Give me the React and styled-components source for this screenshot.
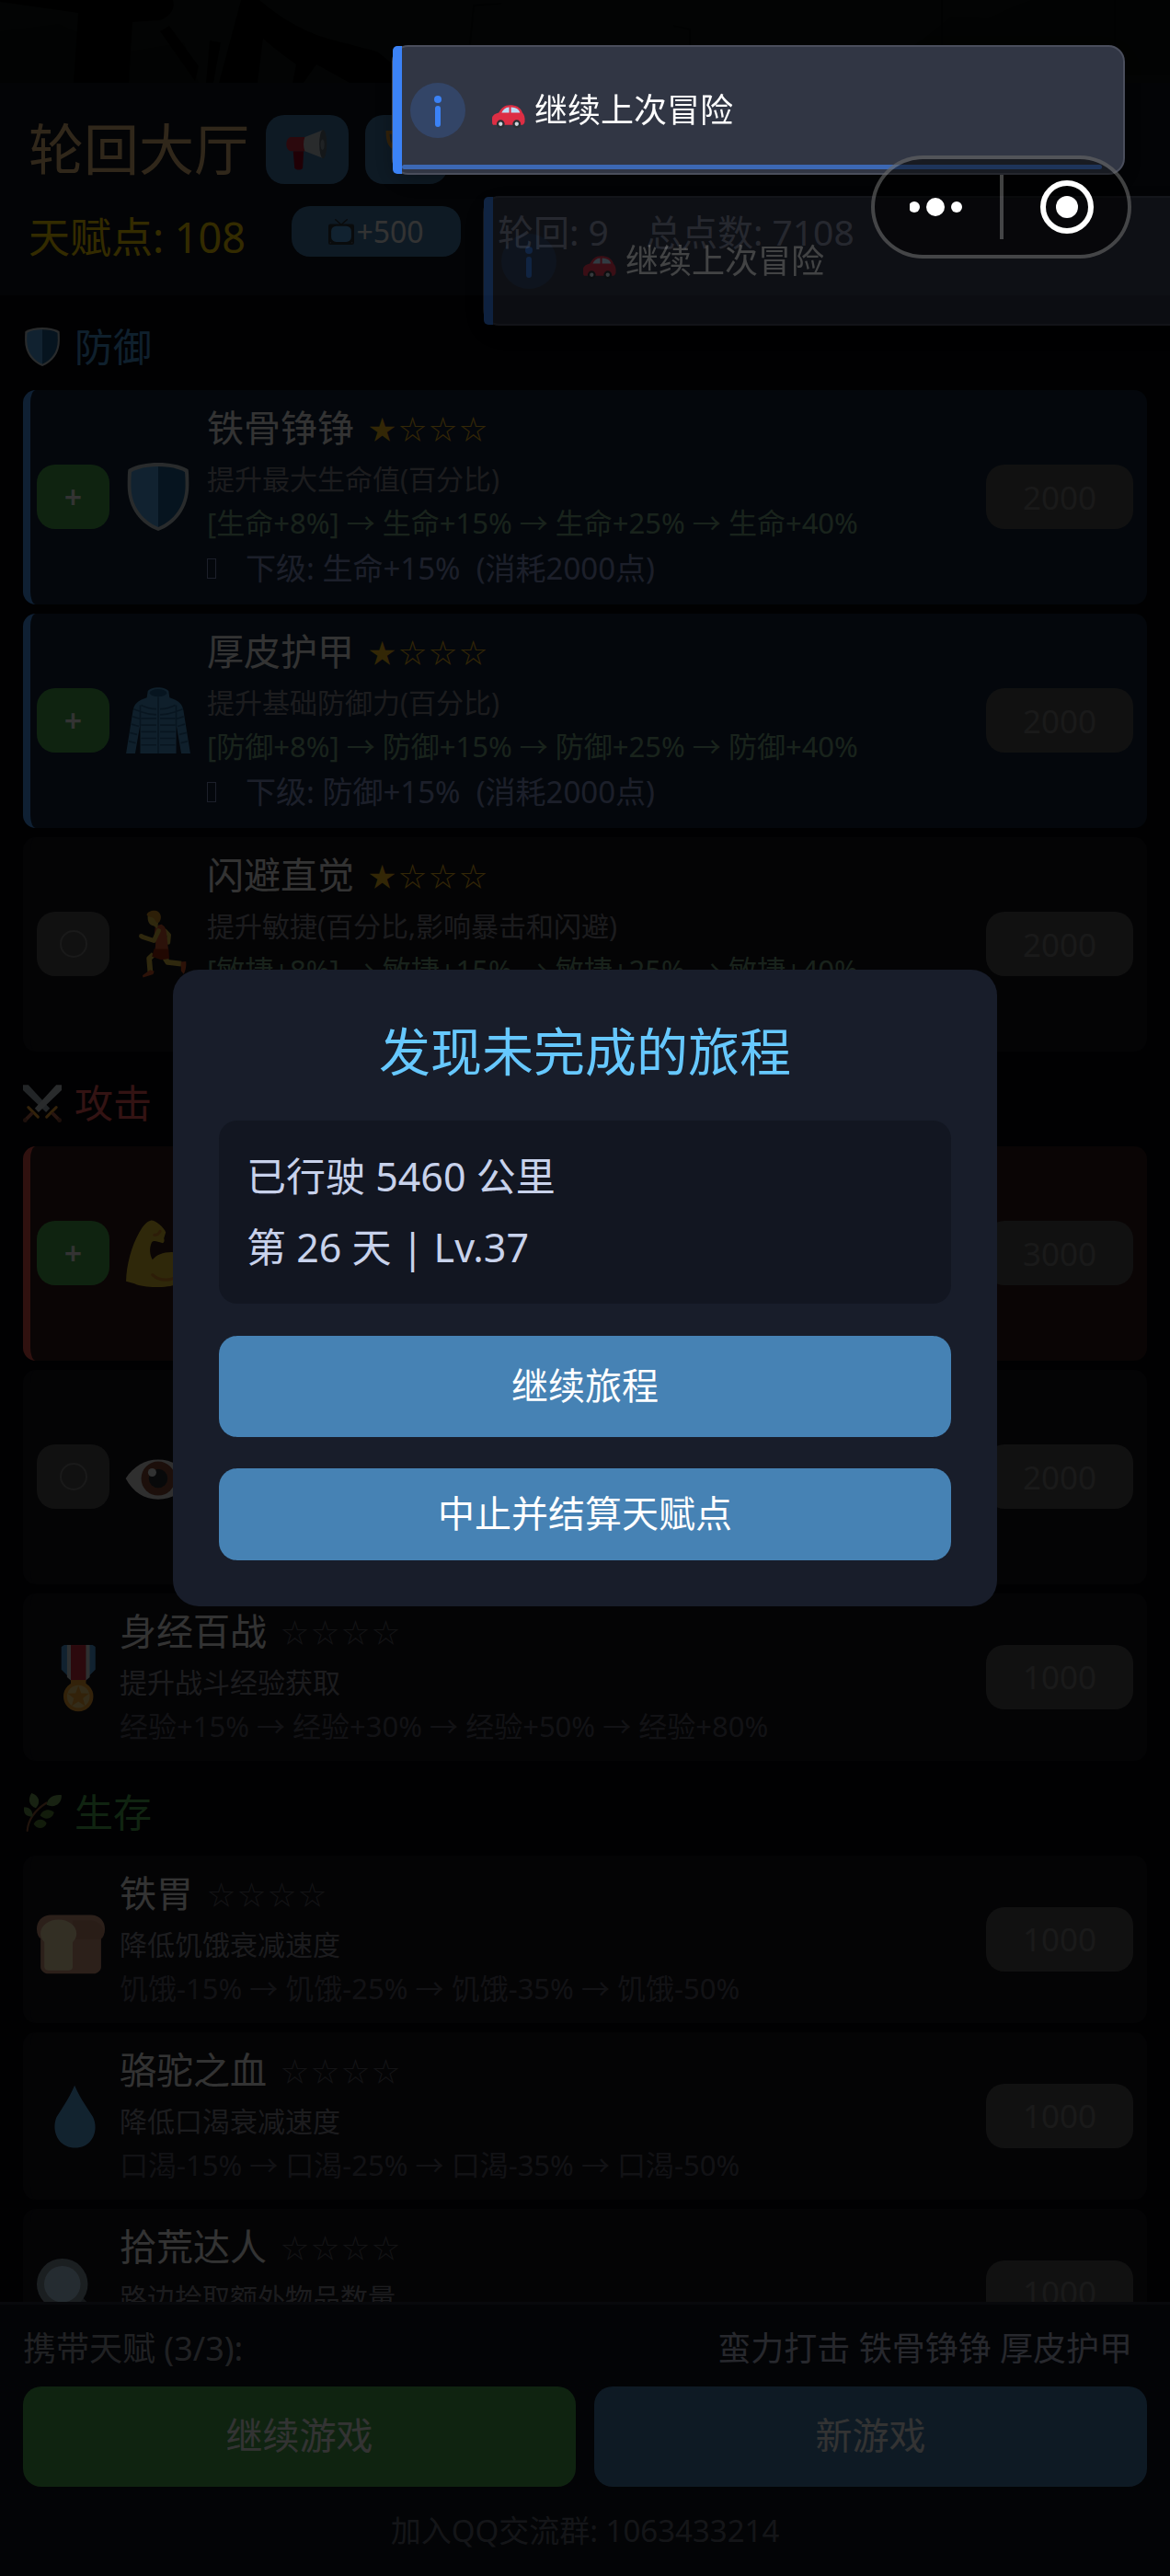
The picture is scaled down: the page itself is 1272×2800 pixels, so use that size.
import React from "react";
import styled, { createGlobalStyle } from "styled-components";

const sections = [
  {
    key: "defense",
    title: "防御",
    icon: "shield",
    color: "#4a9ee0",
    skills: [
      {
        name: "铁骨铮铮",
        icon: "shield",
        toggle: "on",
        level: 1,
        desc: "提升最大生命值(百分比)",
        levels: "[生命+8%] → 生命+15% → 生命+25% → 生命+40%",
        next: "下级: 生命+15%  (消耗2000点)",
        price: 2000,
        tone: "blue",
      },
      {
        name: "厚皮护甲",
        icon: "coat",
        toggle: "on",
        level: 1,
        desc: "提升基础防御力(百分比)",
        levels: "[防御+8%] → 防御+15% → 防御+25% → 防御+40%",
        next: "下级: 防御+15%  (消耗2000点)",
        price: 2000,
        tone: "blue",
      },
      {
        name: "闪避直觉",
        icon: "runner",
        toggle: "off",
        level: 1,
        desc: "提升敏捷(百分比,影响暴击和闪避)",
        levels: "[敏捷+8%] → 敏捷+15% → 敏捷+25% → 敏捷+40%",
        next: "下级: 敏捷+15%  (消耗2000点)",
        price: 2000,
      },
    ],
  },
  {
    key: "attack",
    title: "攻击",
    icon: "swords",
    color: "#ff6060",
    skills: [
      {
        name: "蛮力打击",
        icon: "bicep",
        toggle: "on",
        level: 1,
        desc: "提升攻击力(百分比)",
        levels: "[攻击+15%] → 攻击+25%",
        next: "下级: 攻击+25%  (消耗3000点)",
        price: 3000,
        tone: "red",
      },
      {
        name: "致命洞察",
        icon: "eye",
        toggle: "off",
        level: 1,
        desc: "提升暴击率",
        levels: "[暴击+5%] → 暴击+10%",
        next: "下级: 暴击+10%  (消耗2000点)",
        price: 2000,
      },
      {
        name: "身经百战",
        icon: "medal",
        level: 0,
        desc: "提升战斗经验获取",
        levels: "经验+15% → 经验+30% → 经验+50% → 经验+80%",
        price: 1000,
      },
    ],
  },
  {
    key: "survival",
    title: "生存",
    icon: "herb",
    color: "#4fb455",
    skills: [
      {
        name: "铁胃",
        icon: "bread",
        level: 0,
        desc: "降低饥饿衰减速度",
        levels: "饥饿-15% → 饥饿-25% → 饥饿-35% → 饥饿-50%",
        price: 1000,
      },
      {
        name: "骆驼之血",
        icon: "drop",
        level: 0,
        desc: "降低口渴衰减速度",
        levels: "口渴-15% → 口渴-25% → 口渴-35% → 口渴-50%",
        price: 1000,
      },
      {
        name: "拾荒达人",
        icon: "lens",
        level: 0,
        desc: "路边拾取额外物品数量",
        levels: "拾取+1 → 拾取+2 → 拾取+3 → 拾取+4",
        price: 1000,
      },
    ],
  },
];

const art = {
  shield: (
    <>
      <path fill="#CCD6DD" d="M18 0c6 0 11.500 1 15.800 3.500.3 1 .4 4 .4 8.500 0 12-7 20.500-16.200 24C8.800 32.500 1.800 24 1.800 12c0-4.500.1-7.500.4-8.500C6.500 1 12 0 18 0z" />
      <path fill="#55ACEE" d="M18 2C12.500 2 7.800 2.800 3.900 4.900c-.2 1.600-.3 4-.3 7.100 0 10.900 6.100 18.500 14.400 22z" />
      <path fill="#226699" d="M18 2c5.500 0 10.200.8 14.100 2.900.2 1.600.3 4 .3 7.100 0 10.900-6.100 18.500-14.400 22z" />
    </>
  ),
  coat: (
    <>
      <path fill="#4A9AD4" d="M12.500 2.500c2-2.500 9-2.500 11 0L24 6c4 1.500 6.500 2.500 7.300 6.500L35 35.500h-4.800L27.500 20v15.500h-19V20L5.800 35.500H1l3.700-23C5.500 8.500 8 7.500 12 6z" />
      <ellipse cx="18" cy="3.500" rx="4.500" ry="2" fill="#226699" />
      <path fill="none" stroke="#2B6C9E" strokeWidth=".8" d="M18 5.500v30M9 10q4 2 8 2M9 13.500q4 1.500 8 1.500M9 17h8M9 20.500h8M9 24h8M9 27.500h8M9 31h8M19 12q4 0 8-2M19 15q4 0 8-1.500M19 17h8M19 20.500h8M19 24h8M19 27.500h8M19 31h8M5 12l4 1.500M4.500 16l4 1.300M3.800 20l4 1.200M3 24.500l3.800 1M2.400 29l3.700 1M31 12l-4 1.500M31.500 16l-4 1.300M32.200 20l-4 1.200M33 24.500l-3.800 1M33.600 29l-3.700 1M8.500 10v11M27.500 10v11" />
    </>
  ),
  runner: (
    <>
      <path fill="none" stroke="#E8C547" strokeWidth="2.200" strokeLinejoin="round" strokeLinecap="round" d="M21.500 11l2.200 2.300-.4 4" />
      <path fill="none" stroke="#E8C547" strokeWidth="2.800" strokeLinejoin="round" d="M21 24.500l2 3.200 7.200.8M15.500 23.500l-2.300 2.200.6 7" />
      <path fill="#DE5B2C" d="M30 27.500l2.700-.3c.3 2.500-.2 4.800-1.200 6.700l-1.400-1.500zM9.700 34.700l4-3 2.200.8-.6 1.600-5.300 1.600z" />
      <path fill="#DD5A35" d="M16.500 8.500l3.200-.8c1.700.8 2.300 2 2.600 4l1.100 9.800h-7.200c.6-3.500.6-5-.3-8z" />
      <path fill="#A62A0A" d="M15.800 20.700h7.700l.3 5.100-4.300.6-4.800-1.700z" />
      <path fill="none" stroke="#E8C547" strokeWidth="2.400" strokeLinejoin="round" strokeLinecap="round" d="M18.200 11l-2.500 5.300-6-2" />
      <circle cx="9" cy="13.900" r="1.200" fill="#E8C547" />
      <path fill="#E8C547" d="M12.500 3l6 1-1 6-1.800-1.500c-2.500-.5-3.500-2.500-3.200-5.500z" />
      <path fill="#E09A28" d="M11.900 2.500C13-.3 19-.8 19.400 3.500c.1 2-.9 3.500-1.900 3.300-1-.2-1.200-2.400-2.600-2.800-1.200-.4-2.300-.3-3-1.500z" />
    </>
  ),
  bicep: (
    <>
      <path fill="#E8C832" d="M14 .8c-2 .3-4 2.700-6 6.200C4 14 1.200 24 1 33l4.500 1.200c5 2.500 17 2.300 22.500.3 4-1.500 6-5 6-8.500 0-5.500-4-8.500-9-8.500-4.500 0-8 1.500-10 4-1.500-2.500-1.800-6-.5-9 1.200-1.500 3-.5 5.500.2 1 .2 1.500-1 1-2.500l1-3.200C21 4.500 16.500.500 14 .8z" />
      <path fill="none" stroke="#E0912A" strokeWidth="1.600" strokeLinecap="round" d="M15 29.500c4 3.500 10 3.500 13 .5M16 8.500c1.500 0 2.500-1 3-2" />
    </>
  ),
  eye: (
    <>
      <path fill="#E8E8E8" d="M.8 19C5 12.500 11 9 18 9s13 3.500 17.200 10C31 26.500 25.500 30 18 30S5 26.500.8 19z" />
      <circle cx="18" cy="19" r="9" fill="#8A4B38" />
      <circle cx="18" cy="19" r="5" fill="#292F33" />
      <circle cx="14.800" cy="15.800" r="2.200" fill="#F5F8FA" />
    </>
  ),
  medal: (
    <>
      <path fill="#55ACEE" d="M13 2l1.500-1h15L31 2v12l-6 6h-6l-6-6z" />
      <path fill="#E1E8ED" d="M16 1h12v17l-3 2.500h-6L16 18z" />
      <path fill="#DD2E44" d="M18 1h8v19h-8z" />
      <path fill="#FFAC33" d="M18 19.500h8v4h-8z" />
      <circle cx="22" cy="28.200" r="7.900" fill="#FFAC33" />
      <circle cx="22" cy="28.200" r="6" fill="#FFD983" />
      <path fill="#FFAC33" d="M22 22.500l1.500 4 4.200.1-3.300 2.600 1.200 4.100-3.600-2.400-3.600 2.400 1.200-4.100-3.300-2.600 4.200-.1z" />
    </>
  ),
  bread: (
    <>
      <path fill="#D99E82" d="M7 6h22c5 .5 7 4.500 7 8.500 0 3-1 5-2 6V38c0 2-2 4-4 4H6c-2 0-4-2-4-4V20.500c-1-1-2-3-2-6C0 10 2.500 6.500 7 6z" transform="scale(1 .86)" />
      <path fill="#B87B61" d="M19 8h10c4 .5 6.500 3 6.500 7 0 1.500-.6 2.700-1.500 3H20z" opacity=".4" />
      <path fill="#FFE8B6" d="M11.500 7.500c5 0 9.500 3 9.500 7.500 0 2-1 3.500-2 4.500v13c0 1-.8 1.900-2 1.900H6c-1.200 0-2-.9-2-1.900v-13c-1-1-2-2.500-2-4.500 0-4.500 4.500-7.500 9.500-7.500z" />
    </>
  ),
  drop: (
    <path fill="#5DADEC" d="M20 1.800c2.500 6 6.500 11.700 9.700 16.700C33 25.500 29.500 34.800 20.300 34.800S7.500 25.500 10.500 18.500C13.700 13.500 17.500 7.800 20 1.800z" />
  ),
  lens: (
    <>
      <path stroke="#66757F" strokeWidth="5" strokeLinecap="round" d="M22 22l11 11" />
      <circle cx="13.500" cy="13.500" r="13.500" fill="#8899A6" />
      <circle cx="13.500" cy="13.500" r="9.600" fill="#BBDDF5" />
    </>
  ),
  swords: (
    <>
      <path fill="#AAB8C2" d="M0 1h5l20 22-3.500 3.500L0 6z" />
      <path fill="#CCD6DD" d="M36 1h-5L11 23l3.500 3.500L36 6z" />
      <path fill="none" stroke="#FFAC33" strokeWidth="2.600" strokeLinecap="round" d="M5 22l9 9M31 22l-9 9" />
      <path fill="none" stroke="#C1694F" strokeWidth="3.200" strokeLinecap="round" d="M8 28l-6 6M28 28l6 6" />
      <circle cx="2" cy="34" r="2" fill="#8A4B38" />
      <circle cx="34" cy="34" r="2" fill="#8A4B38" />
    </>
  ),
  herb: (
    <>
      <path fill="none" stroke="#A0603C" strokeWidth="1.800" strokeLinecap="round" d="M4 35c1-11 7-19 18-26" />
      <path fill="#77A85A" d="M8 0c7 2 9 9 4 14C6 12 4 6 8 0zM36 2c0 9-7 12-14 9 1-7 7-10 14-9z" />
      <path fill="#6A9A50" d="M1 13c6 0 8 4 8 9-6 0-9-3-8-9z" />
      <path fill="#5C8A3A" d="M29 18c-2 7-9 7-13 3 2-6 9-7 13-3zM22 28c-2 6-9 6-12 1 2-5 9-6 12-1z" />
    </>
  ),
  megaphone: (
    <>
      <path fill="#A0041E" d="M6 19h9l-.8 14c-.2 2.500-6.500 2.500-7 0z" />
      <path fill="#DD2E44" d="M4 7h14v12H4C-1 18-1 8 4 7z" />
      <path fill="#CCD6DD" d="M16 7L31.500 1v24L16 19c-1.500-4-1.500-8 0-12z" />
      <ellipse cx="31.500" cy="13" rx="3.200" ry="12.300" fill="#66757F" />
      <ellipse cx="31" cy="13.500" rx="1.600" ry="4.500" fill="#99AAB5" />
    </>
  ),
  trophy: (
    <>
      <path fill="none" stroke="#FFAC33" strokeWidth="3" d="M9 3H2c0 8 2 13 9 15M27 3h7c0 8-2 13-9 15" />
      <path fill="#FFAC33" d="M8 0h20c0 12-3 20-8 22v7h6v5H10v-5h6v-7C11 20 8 12 8 0z" />
    </>
  ),
  tv: (
    <>
      <path fill="none" stroke="#31373D" strokeWidth="2" strokeLinecap="round" d="M10 1l8 7 8-7" />
      <rect x="0" y="7" width="36" height="29" rx="3" fill="#31373D" />
      <rect x="4" y="10" width="28" height="22" rx="7" fill="#55ACEE" />
      <circle cx="3" cy="33" r="1" fill="#66757F" />
      <circle cx="33" cy="33" r="1" fill="#66757F" />
    </>
  ),
  car: (
    <>
      <path fill="#DD2E44" d="M1 22c0-3 3-5 7-6 3-5 6-8 12-8s11 2 13 8c2 2 3 5 2.500 10-.5 2-2 3-3 3H3c-1.500 0-2-1-2-3z" />
      <path fill="#BBDDF5" d="M11 16c2-3.500 4-5.500 8-5.800V16zM21 10.200c5 .2 8 1.800 9.500 5.800H21z" />
      <circle cx="10" cy="28" r="4.300" fill="#292F33" />
      <circle cx="10" cy="28" r="2.100" fill="#CCD6DD" />
      <circle cx="27" cy="28" r="4.300" fill="#292F33" />
      <circle cx="27" cy="28" r="2.100" fill="#CCD6DD" />
    </>
  ),
};

const Emoji = ({ name, size }) => (
  <EmojiSvg viewBox="0 0 36 36" $size={size} aria-hidden="true">
    {art[name]}
  </EmojiSvg>
);

const SkillCard = ({ skill }) => (
  <Card $tone={skill.tone}>
    {skill.toggle && (
      <Toggle type="button" $on={skill.toggle === "on"} aria-label={skill.name}>
        {skill.toggle === "on" ? "+" : <Ring />}
      </Toggle>
    )}
    <Emoji name={skill.icon} size={74} />
    <SkillInfo>
      <SkillTitle>
        <SkillName>{skill.name}</SkillName>
        <Stars $active={skill.level > 0}>
          {[0, 1, 2, 3].map((i) => (
            <span key={i}>{i < skill.level ? "★" : "☆"}</span>
          ))}
        </Stars>
      </SkillTitle>
      <SkillDesc>{skill.desc}</SkillDesc>
      <SkillLevels $active={skill.level > 0}>{skill.levels}</SkillLevels>
      {skill.next && (
        <SkillNext>
          <Bullet />
          {skill.next}
        </SkillNext>
      )}
    </SkillInfo>
    <Price type="button" disabled>
      {skill.price}
    </Price>
  </Card>
);

const Toast = ({ leaving }) => (
  <ToastBox $leaving={leaving} role="status">
    <ToastIcon viewBox="0 0 60 60" aria-hidden="true">
      <circle cx="30" cy="30" r="30" fill="#3b82f6" fillOpacity=".2" />
      <circle cx="30" cy="18" r="4" fill="#3b82f6" />
      <rect x="27" y="25" width="6" height="23" rx="3" fill="#3b82f6" />
    </ToastIcon>
    <ToastText>
      <Emoji name="car" size={37} />
      继续上次冒险
    </ToastText>
    {!leaving && <ToastProgress />}
  </ToastBox>
);

const App = () => {
  return (
    <Page>
      <GlobalStyle />
      <Hero viewBox="0 0 1272 90" preserveAspectRatio="xMidYMid slice" aria-hidden="true">
        <rect width="1272" height="90" fill="#121816" />
        <path fill="#0c110f" d="M0 34l64-8 22 10v54H0zM140 56l60-10 16 44h-76zM825 64l15-8 20 4 10-8 18 8 22-2 34 4 40-6 20-14 30-24 40 2 30-14 40-14h128v90H825z" />
        <path fill="#020302" d="M0 0h188q4 14-14 22l-30 2-4 66H80l5-76L0 2zM262 0h20q40 34 82 44l46 12 30 24v10h-60l-36-20-14 20h-12l4-20q-20-14-36-28l-6 48h-42zM174 34l10-6 32 44-4 16zM228 44l12 2-8 44h-8z" />
        <path fill="none" stroke="#090c0b" strokeWidth="2" d="M511 48l4-42 30-2M750 50V32l-18-4M1024 50V0M1212 50V0" />
      </Hero>

      <Header>
        <TitleRow>
          <Title>轮回大厅</Title>
          <IconButton type="button" aria-label="公告">
            <Emoji name="megaphone" size={46} />
          </IconButton>
          <IconButton type="button" aria-label="排行">
            <Emoji name="trophy" size={46} />
          </IconButton>
        </TitleRow>
        <StatsRow>
          <PointsGroup>
            <Points>天赋点: 108</Points>
            <AdButton type="button">
              <Emoji name="tv" size={28} />
              +500
            </AdButton>
          </PointsGroup>
          <Stat>轮回: 9</Stat>
          <Stat>总点数: 7108</Stat>
        </StatsRow>
      </Header>

      <SkillList>
        {sections.map((section) => (
          <section key={section.key}>
            <SectionTitle $color={section.color}>
              <Emoji name={section.icon} size={42} />
              {section.title}
            </SectionTitle>
            <Cards>
              {section.skills.map((skill) => (
                <SkillCard key={skill.name} skill={skill} />
              ))}
            </Cards>
          </section>
        ))}
      </SkillList>

      <Footer>
        <CarryRow>
          <span>携带天赋 (3/3):</span>
          <CarryNames>蛮力打击 铁骨铮铮 厚皮护甲</CarryNames>
        </CarryRow>
        <FooterButtons>
          <GameButton type="button" $green>
            继续游戏
          </GameButton>
          <GameButton type="button">新游戏</GameButton>
        </FooterButtons>
        <Group>加入QQ交流群: 1063433214</Group>
      </Footer>

      <Overlay>
        <Modal role="dialog" aria-labelledby="journey-title">
          <ModalTitle id="journey-title">发现未完成的旅程</ModalTitle>
          <JourneyInfo>
            <p>已行驶 5460 公里</p>
            <p>第 26 天 | Lv.37</p>
          </JourneyInfo>
          <ModalButton type="button" $primary>
            继续旅程
          </ModalButton>
          <ModalButton type="button">中止并结算天赋点</ModalButton>
        </Modal>
      </Overlay>

      <Toast />
      <Toast leaving />

      <Capsule>
        <CapsuleButton type="button" aria-label="更多">
          <svg width="60" height="24" viewBox="0 0 60 24">
            <circle cx="5" cy="12" r="6" fill="#fff" />
            <circle cx="28" cy="12" r="10" fill="#fff" />
            <circle cx="51" cy="12" r="6" fill="#fff" />
          </svg>
        </CapsuleButton>
        <CapsuleLine />
        <CapsuleButton type="button" aria-label="关闭">
          <svg width="66" height="60" viewBox="0 0 66 60">
            <circle cx="35" cy="30" r="26" fill="none" stroke="#fff" strokeWidth="6" />
            <circle cx="35" cy="30" r="12" fill="#fff" />
          </svg>
        </CapsuleButton>
      </Capsule>
    </Page>
  );
};

const GlobalStyle = createGlobalStyle`
  * {
    box-sizing: border-box;
    margin: 0;
  }
  body {
    background: #06060a;
    color: #ffffff;
    font-family: "Noto Sans", "Noto Sans CJK SC", sans-serif;
    overflow: hidden;
  }
  button {
    border: none;
    padding: 0;
    color: inherit;
    font-family: inherit;
    display: flex;
    align-items: center;
    justify-content: center;
  }
`;

const Page = styled.div`
  height: 100vh;
  display: flex;
  flex-direction: column;
`;

const EmojiSvg = styled.svg`
  width: ${(props) => props.$size}px;
  height: ${(props) => props.$size}px;
  flex-shrink: 0;
  overflow: visible;
`;

const Hero = styled.svg`
  display: block;
  width: 100%;
  height: 90px;
  flex-shrink: 0;
`;

const Header = styled.header`
  background: #0f141e;
  padding: 35px 31px 30px;
  display: flex;
  flex-direction: column;
  gap: 24px;
`;

const TitleRow = styled.div`
  display: flex;
  align-items: center;
  gap: 18px;
`;

const Title = styled.h1`
  font-size: 60px;
  font-weight: 400;
  line-height: 75px;
  color: #f0c080;
`;

const IconButton = styled.button`
  width: 90px;
  height: 75px;
  border-radius: 20px;
  background: #4682b4;
`;

const StatsRow = styled.div`
  display: flex;
  align-items: flex-start;
  gap: 40px;
  white-space: nowrap;
`;

const PointsGroup = styled.div`
  display: flex;
  align-items: flex-start;
  gap: 50px;
`;

const Points = styled.span`
  font-size: 45px;
  line-height: 67px;
  color: #ffd700;
`;

const AdButton = styled.button`
  width: 184px;
  height: 55px;
  border-radius: 20px;
  background: #4682b4;
  font-size: 32px;
  gap: 2px;
`;

const Stat = styled.span`
  font-size: 39px;
  line-height: 55px;
  color: #b0b8c8;
`;

const SkillList = styled.main`
  flex: 1;
  min-height: 0;
  overflow: hidden;
  padding: 0 25px;
`;

const SectionTitle = styled.h2`
  display: flex;
  align-items: center;
  gap: 14px;
  padding: 28px 0 19px;
  font-size: 42px;
  font-weight: 400;
  line-height: 56px;
  color: ${(props) => props.$color};
`;

const Cards = styled.div`
  display: flex;
  flex-direction: column;
  gap: 10px;
`;

const tones = {
  blue: { background: "#14263c", border: "#4a9eff" },
  red: { background: "#321a1a", border: "#f0564c" },
};

const Card = styled.article`
  display: flex;
  align-items: center;
  gap: 16px;
  padding: 14px 15px 15px 7px;
  border-left: 8px solid
    ${(props) => (props.$tone ? tones[props.$tone].border : "#14141c")};
  border-radius: 14px;
  background: ${(props) =>
    props.$tone ? tones[props.$tone].background : "#14141c"};
`;

const Toggle = styled.button`
  width: 79px;
  height: 70px;
  flex-shrink: 0;
  border-radius: 20px;
  font-size: 34px;
  font-weight: 600;
  background: ${(props) => (props.$on ? "#4caf50" : "#555555")};
`;

const Ring = styled.span`
  width: 30px;
  height: 30px;
  border: 2px solid #808080;
  border-radius: 50%;
`;

const SkillInfo = styled.div`
  flex: 1;
  min-width: 0;
  white-space: pre;
`;

const SkillTitle = styled.div`
  display: flex;
  align-items: center;
  gap: 16px;
  margin-bottom: 5px;
`;

const SkillName = styled.h3`
  font-size: 40px;
  font-weight: 400;
  line-height: 54px;
`;

const Stars = styled.span`
  display: flex;
  gap: 4px;
  font-size: 29px;
  color: ${(props) => (props.$active ? "#ffc020" : "#606068")};
`;

const SkillDesc = styled.p`
  font-size: 30px;
  line-height: 48px;
  color: #8c8c98;
`;

const SkillLevels = styled.p`
  font-size: 31px;
  line-height: 46px;
  color: ${(props) => (props.$active ? "#7fb08a" : "#5c5c68")};
`;

const SkillNext = styled.p`
  display: flex;
  align-items: center;
  gap: 32px;
  margin-top: 3px;
  font-size: 33px;
  line-height: 48px;
  color: #8c9cd0;
`;

const Bullet = styled.i`
  width: 10px;
  height: 22px;
  border: 1px solid currentColor;
`;

const Price = styled.button`
  width: 160px;
  height: 70px;
  flex-shrink: 0;
  border-radius: 20px;
  background: #555555;
  color: #808080;
  font-size: 35px;
`;

const Footer = styled.footer`
  border-top: 3px solid #2a303c;
  background: #0f141e;
  padding: 21px 25px 24px;
`;

const CarryRow = styled.div`
  display: flex;
  justify-content: space-between;
  padding-right: 16px;
  margin-bottom: 14px;
  font-size: 36px;
  line-height: 54px;
  color: #a0a4b0;
`;

const CarryNames = styled.span`
  color: #c0c8e0;
`;

const FooterButtons = styled.div`
  display: grid;
  grid-template-columns: 1fr 1fr;
  gap: 20px;
`;

const GameButton = styled.button`
  height: 109px;
  border-radius: 20px;
  font-size: 40px;
  line-height: 54px;
  padding-bottom: 4px;
  background: ${(props) => (props.$green ? "#4caf50" : "#4682b4")};
`;

const Group = styled.p`
  margin-top: 23px;
  font-size: 33px;
  line-height: 50px;
  text-align: center;
  color: #666c78;
`;

const Overlay = styled.div`
  position: fixed;
  inset: 0;
  display: flex;
  align-items: center;
  justify-content: center;
  background: rgba(0, 0, 0, 0.8);
`;

const Modal = styled.div`
  width: 90%;
  max-width: 896px;
  display: flex;
  flex-direction: column;
  padding: 50px;
  border-radius: 28px;
  background: #181d2a;
`;

const ModalTitle = styled.h2`
  margin-bottom: 38px;
  font-size: 56px;
  font-weight: 400;
  line-height: 76px;
  text-align: center;
  color: #66c8ff;
`;

const JourneyInfo = styled.div`
  margin-bottom: 35px;
  padding: 22px 30px 23px;
  border-radius: 20px;
  background: #121621;
  color: #c8d2eb;
  font-size: 43px;
  line-height: 77px;
`;

const ModalButton = styled.button`
  height: ${(props) => (props.$primary ? "110px" : "100px")};
  margin-bottom: ${(props) => (props.$primary ? "34px" : "0")};
  padding-bottom: 2px;
  border-radius: 20px;
  background: #4682b4;
  font-size: 40px;
  line-height: 54px;
`;

const ToastBox = styled.div`
  position: fixed;
  top: ${(props) => (props.$leaving ? "213px" : "49px")};
  right: ${(props) => (props.$leaving ? "-50px" : "49px")};
  width: 797px;
  height: 141px;
  display: flex;
  align-items: center;
  gap: 28px;
  padding-left: 18px;
  border: 2px solid #4a4e5c;
  border-radius: 18px;
  background: #313644;
  box-shadow: 0 8px 24px rgba(0, 0, 0, 0.3);
  opacity: ${(props) => (props.$leaving ? 0.25 : 1)};
  &::before {
    content: "";
    position: absolute;
    top: -1px;
    bottom: -1px;
    left: -1px;
    width: 10px;
    border-radius: 5px 0 0 5px;
    background: #3b82f6;
  }
`;

const ToastIcon = styled.svg`
  width: 60px;
  height: 60px;
`;

const ToastText = styled.span`
  display: flex;
  align-items: center;
  gap: 10px;
  font-size: 36px;
  line-height: 60px;
  svg {
    margin-top: 10px;
  }
`;

const ToastProgress = styled.div`
  position: absolute;
  left: 9px;
  bottom: 4px;
  width: 96%;
  height: 5px;
  border-radius: 3px;
  background: #3c68b4;
`;

const Capsule = styled.div`
  position: fixed;
  top: 169px;
  right: 42px;
  width: 283px;
  height: 112px;
  display: flex;
  align-items: center;
  border: 4px solid rgba(255, 255, 255, 0.25);
  border-radius: 56px;
  background: rgba(0, 0, 0, 0.5);
`;

const CapsuleButton = styled.button`
  flex: 1;
  height: 100%;
  background: none;
`;

const CapsuleLine = styled.span`
  width: 4px;
  height: 70px;
  background: rgba(255, 255, 255, 0.25);
`;

export default App;
